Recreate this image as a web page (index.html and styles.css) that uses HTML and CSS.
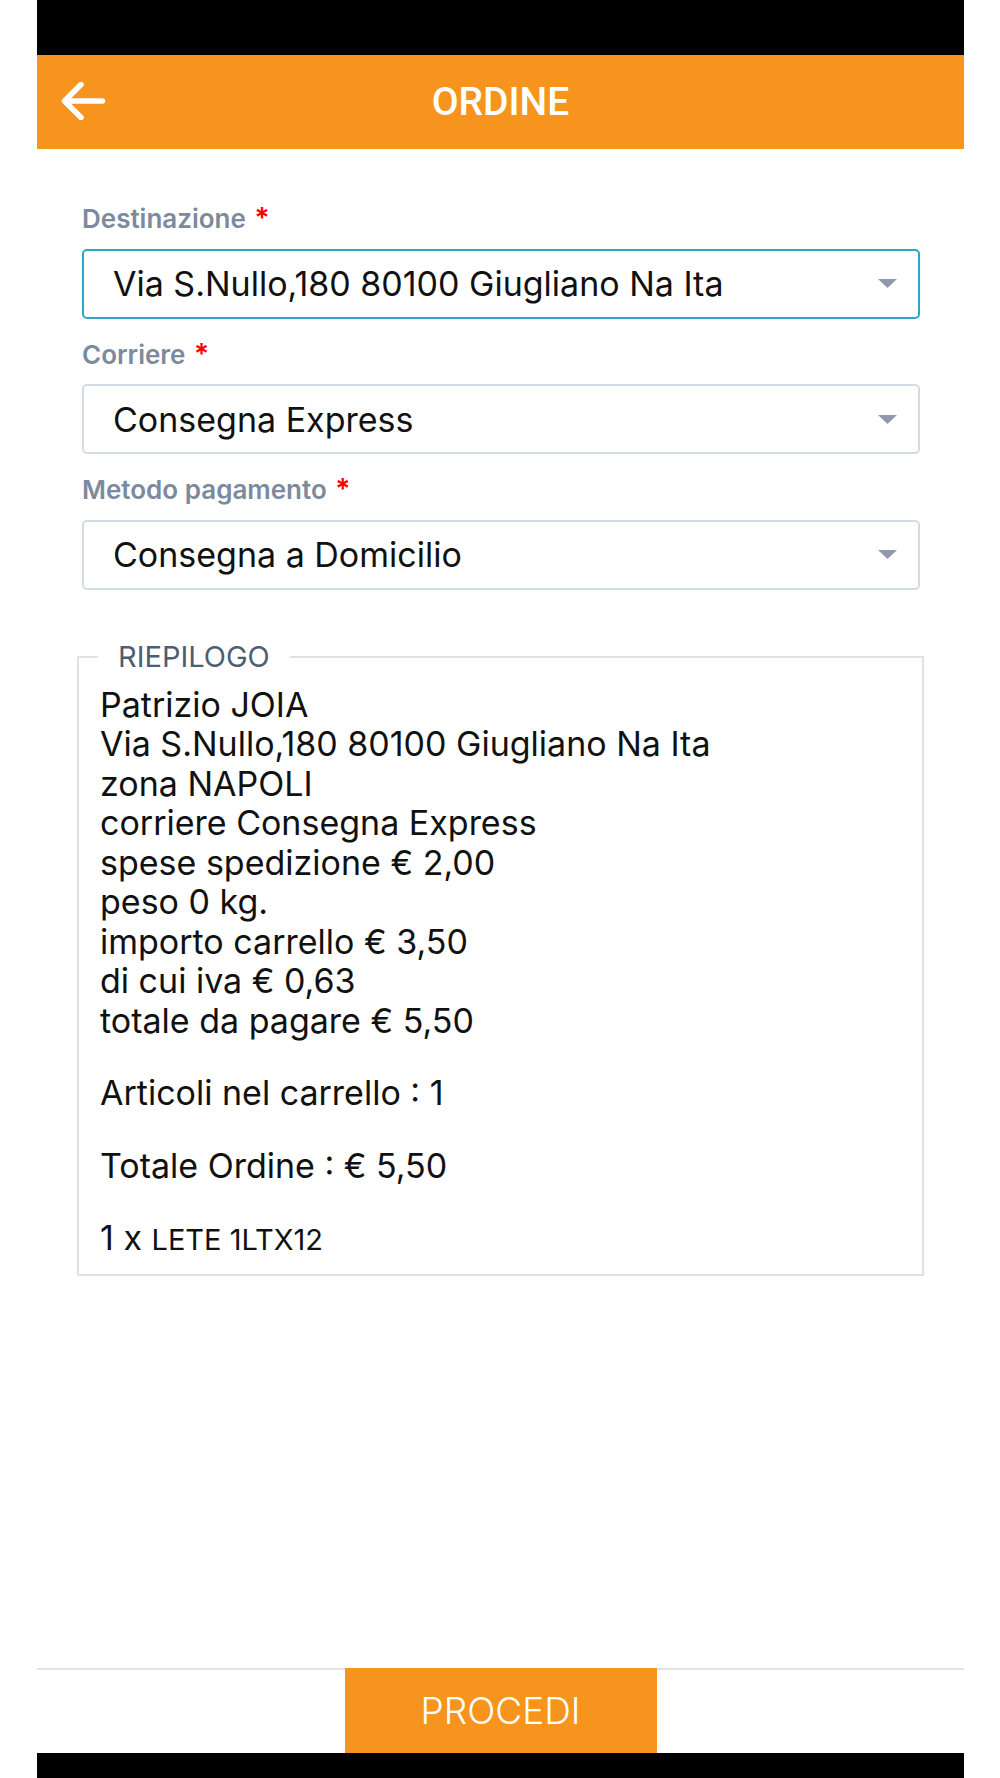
FILE: index.html
```html
<!DOCTYPE html>
<html lang="it">
<head>
    <meta charset="UTF-8">
    <meta name="viewport" content="width=device-width, initial-scale=1.0">
    <title>Ordine</title>
    <link rel="stylesheet" href="styles.css">
</head>
<body>

    <div class="screen">
        <div class="status-bar"></div>

        <header class="top-bar">
            <svg class="back" width="46" height="38" viewBox="0 0 46 38">
                <path d="M3.5 19 H41.5 M3.5 19 L20 2.5 M3.5 19 L20 35.5" fill="none" stroke="#fff" stroke-width="5.5" stroke-linecap="round" stroke-linejoin="round"/>
            </svg>
            <h1>ORDINE</h1>
        </header>

        <main class="content">
            <!-- campi ordine -->
            <div class="field">
                <label>Destinazione <span class="req">*</span></label>
                <div class="select active">
                    <span>Via S.Nullo,180 80100 Giugliano Na Ita</span>
                    <svg width="19" height="9" viewBox="0 0 19 9"><path d="M0 0 H19 L9.5 9 Z" fill="#8e99ab"/></svg>
                </div>
            </div>

            <div class="field">
                <label>Corriere <span class="req">*</span></label>
                <div class="select">
                    <span>Consegna Express</span>
                    <svg width="19" height="9" viewBox="0 0 19 9"><path d="M0 0 H19 L9.5 9 Z" fill="#8e99ab"/></svg>
                </div>
            </div>

            <div class="field">
                <label>Metodo pagamento <span class="req">*</span></label>
                <div class="select">
                    <span>Consegna a Domicilio</span>
                    <svg width="19" height="9" viewBox="0 0 19 9"><path d="M0 0 H19 L9.5 9 Z" fill="#8e99ab"/></svg>
                </div>
            </div>

            <!-- riepilogo -->
            <fieldset class="summary">
                <legend>RIEPILOGO</legend>
                <p>
                    Patrizio JOIA<br>
                    Via S.Nullo,180 80100 Giugliano Na Ita<br>
                    zona NAPOLI<br>
                    corriere Consegna Express<br>
                    spese spedizione € 2,00<br>
                    peso 0 kg.<br>
                    importo carrello € 3,50<br>
                    di cui iva € 0,63<br>
                    totale da pagare € 5,50
                </p>
                <p>Articoli nel carrello : 1</p>
                <p>Totale Ordine : € 5,50</p>
                <p>1 x <small>LETE 1LTX12</small></p>
            </fieldset>
        </main>

        <footer class="bottom">
            <button type="button" class="btn-go">PROCEDI</button>
        </footer>

        <div class="nav-bar"></div>
    </div>

</body>
</html>
```

FILE: styles.css
```css
body {
    margin: 0;
    background: #fff;
    font-family: Inter, "Noto Sans", sans-serif;
    color: #111;
}
.screen {
    width: 927px;
    height: 1778px;
    margin-left: 37px;
    display: flex;
    flex-direction: column;
}
.status-bar {
    height: 55px;
    background: #000;
}
.top-bar {
    height: 94px;
    background: #f7941d;
    display: flex;
    align-items: center;
    justify-content: center;
    position: relative;
}
.top-bar .back {
    position: absolute;
    left: 24px;
    top: 27px;
}
.top-bar h1 {
    margin: 0;
    color: #fff;
    font-family: Roboto, sans-serif;
    font-weight: 500;
    font-size: 39px;
}
.content {
    flex: 1;
    padding: 54px 44px 0 45px;
}
.field {
    margin-bottom: 20px;
}
.field label {
    display: block;
    height: 32px;
    font-size: 26px;
    line-height: 32px;
    font-weight: 600;
    color: #7b8a9c;
    margin-bottom: 13.5px;
}
.req {
    color: #f00;
    font-size: 28px;
    line-height: 0;
    margin-left: 2px;
}
.select {
    height: 70px;
    box-sizing: border-box;
    border: 2px solid #d3dbe5;
    border-radius: 5px;
    display: flex;
    align-items: center;
    justify-content: space-between;
    padding: 0 21px 0 29px;
    font-size: 34px;
    color: #111;
}
.select.active {
    border-color: #2ba5c8;
}
.summary {
    margin: 51px -4px 0 -5px;
    border: 2px solid #dde2e6;
    padding: 12px 21px 14px 21px;
}
.summary legend {
    margin-left: -2px;
    padding: 0 20px;
    font-size: 29px;
    line-height: 32px;
    color: #4d5d73;
}
.summary p {
    margin: 0 0 33px;
    font-size: 34px;
    line-height: 39.5px;
}
.summary p:last-child {
    margin-bottom: 0;
}
.summary small {
    font-size: 29px;
}
.bottom {
    height: 85px;
    border-top: 2px solid #dfe4e4;
    box-sizing: border-box;
    display: flex;
    justify-content: center;
}
.btn-go {
    width: 312px;
    height: 85px;
    margin-top: -2px;
    border: none;
    background: #f7941d;
    color: #fff;
    font-family: Inter, sans-serif;
    font-weight: 300;
    font-size: 37px;
}
.nav-bar {
    height: 25px;
    background: #000;
}
```
